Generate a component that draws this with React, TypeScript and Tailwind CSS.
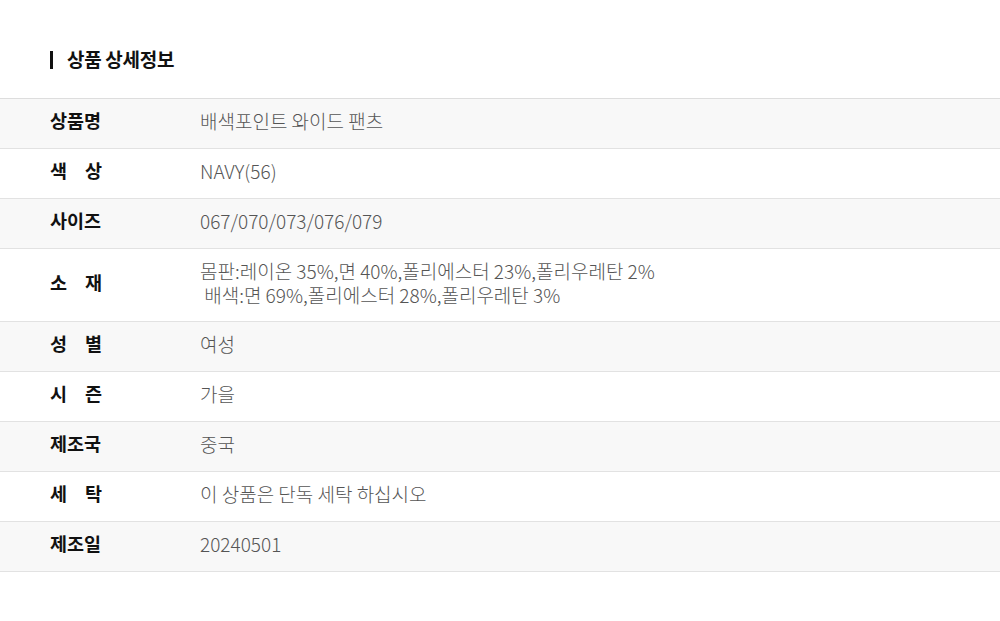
import React from "react";

type Row = { label: string; value: React.ReactNode; spaced?: boolean };

const rows: Row[] = [
  { label: "상품명", value: "배색포인트 와이드 팬츠" },
  { label: "색상", value: "NAVY(56)", spaced: true },
  { label: "사이즈", value: "067/070/073/076/079" },
  {
    label: "소재",
    spaced: true,
    value: (
      <>
        몸판:레이온 35%,면 40%,폴리에스터 23%,폴리우레탄 2%
        <br />
        &nbsp;배색:면 69%,폴리에스터 28%,폴리우레탄 3%
      </>
    ),
  },
  { label: "성별", value: "여성", spaced: true },
  { label: "시즌", value: "가을", spaced: true },
  { label: "제조국", value: "중국" },
  { label: "세탁", value: "이 상품은 단독 세탁 하십시오", spaced: true },
  { label: "제조일", value: "20240501" },
];

export default function App() {
  return (
    <div
      className="w-[1000px] h-[621px] bg-white"
      style={{ fontFamily: '"Noto Sans CJK KR", "Noto Sans", sans-serif' }}
    >
      <div className="pt-[45px] pl-[50px] pb-[25px] flex items-center gap-[14px]">
        <span className="block w-[3px] h-[18px] bg-[#111] mt-[2px]" />
        <h2 className="text-[19px] font-bold text-[#111] tracking-[-0.3px] leading-[28px]">
          상품 상세정보
        </h2>
      </div>
      <div className="border-t border-[#dddddd]">
        {rows.map((r, i) => (
          <div
            key={r.label}
            className={`flex items-center pb-[5px] border-b border-[#e2e2e2] ${
              r.label === "소재" ? "h-[73px]" : "h-[50px]"
            } ${i % 2 === 0 ? "bg-[#f8f8f8]" : "bg-white"}`}
          >
            <div className="w-[200px] pl-[50px] shrink-0">
              {r.spaced ? (
                <div className="w-[52px] flex justify-between text-[18.5px] font-bold text-[#111]">
                  {r.label.split("").map((c, j) => (
                    <span key={j}>{c}</span>
                  ))}
                </div>
              ) : (
                <span className="text-[18.5px] font-bold text-[#111]">
                  {r.label}
                </span>
              )}
            </div>
            <div className="text-[19px] font-light text-[#555] leading-[24px]">
              {r.value}
            </div>
          </div>
        ))}
      </div>
    </div>
  );
}
